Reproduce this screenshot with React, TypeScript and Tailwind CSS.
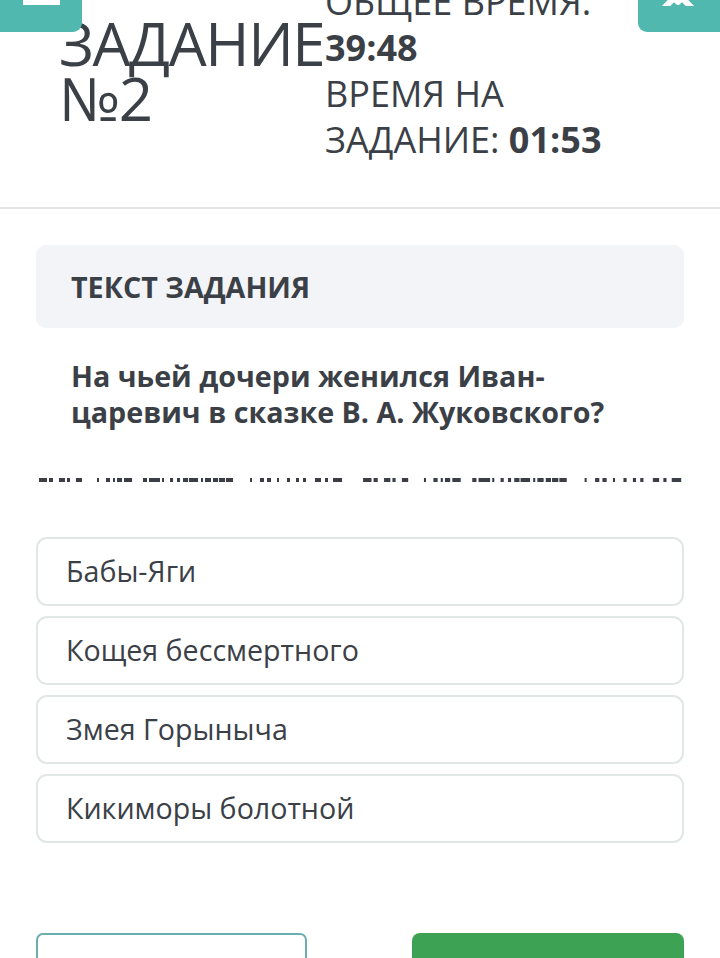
import React from "react";

const answers = ["Бабы-Яги", "Кощея бессмертного", "Змея Горыныча", "Кикиморы болотной"];

// blank line under the question, drawn as a row of dashes
const dashes: [number, number][] = [
  [1, 8], [11, 4], [21, 6], [29, 3], [38, 6],
  [59, 2], [68, 4], [75, 2], [79, 5], [86, 8],
  [105, 4], [111, 11], [124, 2], [132, 3], [139, 3], [145, 5], [151, 9],
  [163, 2], [167, 6], [175, 5], [181, 6], [188, 7],
  [212, 2], [222, 4], [229, 4], [239, 2], [249, 3], [258, 3], [265, 3],
  [277, 6], [287, 3], [295, 9],
];

const DashLine: React.FC = () => (
  <svg width="648" height="4" viewBox="0 0 648 4" className="block">
    <g>
      {dashes.map(([x, w], i) => (
        <rect key={`a${i}`} x={x} y={0} width={w} height={4} fill="#3b3f45" />
      ))}
    </g>
    <g transform="translate(324 0) scale(1.05 1)">
      {dashes.map(([x, w], i) => (
        <rect key={`b${i}`} x={x} y={0} width={w} height={4} fill="#3b3f45" />
      ))}
    </g>
  </svg>
);

const App: React.FC = () => {
  return (
    <div
      className="relative w-[720px] h-[958px] overflow-hidden bg-white text-[#3b4047]"
      style={{ fontFamily: '"Open Sans", "Noto Sans", sans-serif' }}
    >
      {/* menu button */}
      <button className="absolute left-0 top-0 z-10 w-[82px] h-[32px] bg-[#50b8ae] rounded-br-[9px] overflow-hidden">
        <span className="absolute left-[23px] top-0 w-[37px] h-[5px] bg-white" />
      </button>

      {/* close button */}
      <button className="absolute right-0 top-0 z-10 w-[82px] h-[32px] bg-[#50b8ae] rounded-bl-[9px] overflow-hidden">
        <svg width="40" height="20" viewBox="0 0 40 20" className="absolute left-[20px] top-[-14px]">
          <path d="M6 2 L20 16 L34 2" stroke="white" strokeWidth="6" fill="none" strokeLinecap="round" strokeLinejoin="round" />
          <path d="M6 22 L20 8 L34 22" stroke="white" strokeWidth="6" fill="none" strokeLinecap="round" />
        </svg>
      </button>

      {/* header */}
      <div className="-mt-[21px] flex items-center pl-[59px] pb-[44px] border-b-2 border-[#e3e5e7]">
        <h1 className="w-[266px] shrink-0 text-[60px] leading-[55px] font-normal tracking-[-1.4px]">
          ЗАДАНИЕ
          <br />
          №2
        </h1>
        <div className="text-[36px] leading-[46px]">
          <div>ОБЩЕЕ ВРЕМЯ:</div>
          <div className="font-bold">39:48</div>
          <div>ВРЕМЯ НА</div>
          <div>
            ЗАДАНИЕ: <span className="font-bold">01:53</span>
          </div>
        </div>
      </div>

      <div className="px-[36px] pt-[36px]">
        <div className="h-[83px] flex items-center px-[35px] bg-[#f2f4f7] rounded-[10px]">
          <span className="text-[28.7px] font-bold">ТЕКСТ ЗАДАНИЯ</span>
        </div>

        <p className="mt-[30px] px-[35px] text-[28.7px] leading-[36px] font-bold">
          На чьей дочери женился Иван-
          <br />
          царевич в сказке В. А. Жуковского?
        </p>

        <div className="mt-[48px] pl-[2px]">
          <DashLine />
        </div>

        <div className="mt-[55px] flex flex-col gap-[10px]">
          {answers.map((a) => (
            <div
              key={a}
              className="h-[69px] flex items-center px-[28px] border-2 border-[#e1e6e6] rounded-[11px] text-[28.6px]"
            >
              {a}
            </div>
          ))}
        </div>

        <div className="mt-[90px] flex justify-between">
          <button className="w-[271px] h-[60px] border-2 border-[#6aaeb0] rounded-[7px] bg-white" />
          <button className="w-[272px] h-[60px] bg-[#3da253] rounded-[8px]" />
        </div>
      </div>
    </div>
  );
};

export default App;
